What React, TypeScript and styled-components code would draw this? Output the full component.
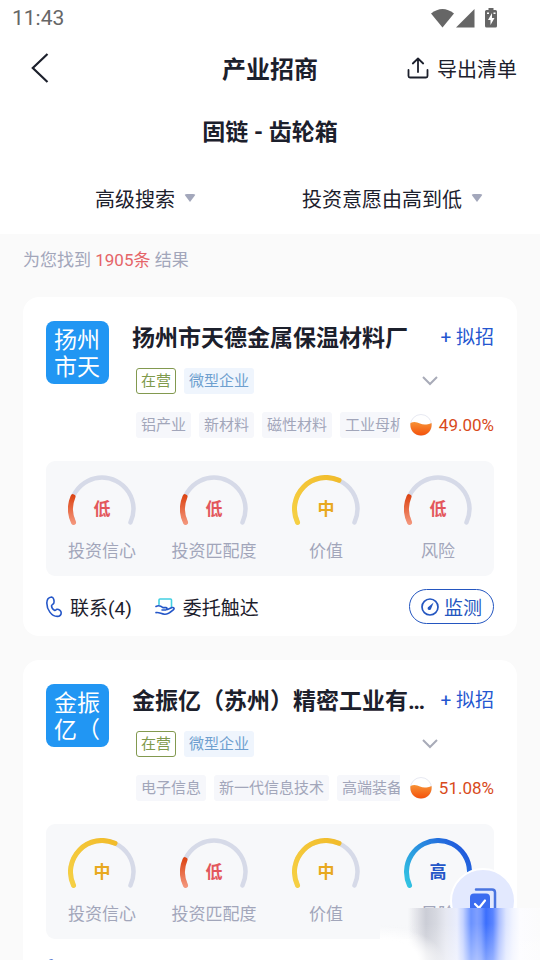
import React, { useId } from "react";
import styled, { createGlobalStyle } from "styled-components";

const GlobalStyle = createGlobalStyle`
  *, *::before, *::after { box-sizing: border-box; }
  body {
    margin: 0;
    background: #fafafa;
    color: #1c202c;
    font-family: Roboto, "Noto Sans CJK SC", sans-serif;
    overflow: hidden;
  }
  button { font-family: inherit; color: inherit; }
  h1, h2, h3, p { margin: 0; }
`;

const Page = styled.div`
  height: 100vh;
  overflow: hidden;
`;

const TopArea = styled.div`
  background: #fff;
`;

const StatusBar = styled.div`
  display: flex;
  align-items: center;
  justify-content: space-between;
  height: 36px;
  padding: 0 41px 0 12px;
  color: #666;
  font-size: 21px;
`;

const StatusIcons = styled.div`
  display: flex;
  align-items: center;
`;

const NavBar = styled.header`
  display: grid;
  grid-template-columns: 1fr auto 1fr;
  align-items: center;
  height: 64px;
  padding: 0 23px;
`;

const PlainButton = styled.button`
  display: inline-flex;
  align-items: center;
  padding: 0;
  border: 0;
  background: none;
  white-space: nowrap;
  cursor: pointer;
`;

const BackButton = styled(PlainButton)`
  justify-self: start;
  padding: 0 8px;
`;

const ExportButton = styled(PlainButton)`
  justify-self: end;
  gap: 8px;
  font-size: 20px;
`;

const PageTitle = styled.h1`
  padding-bottom: 2px;
  font-size: 24px;
  font-weight: 700;
`;

const ChainTitle = styled.h2`
  padding: 16px 0 12px;
  font-size: 23px;
  font-weight: 700;
  line-height: 34px;
  text-align: center;
`;

const FilterBar = styled.div`
  display: flex;
  height: 72px;
  padding: 0 24px 0 22px;
`;

const FilterButton = styled(PlainButton)`
  flex: 1 1 0;
  justify-content: center;
  gap: 9px;
  font-size: 20px;
`;

const Caret = styled.span`
  border: 6px solid transparent;
  border-top: 8px solid #a3a7bb;
  border-bottom: 0;
  border-radius: 3px;
`;

const ResultLine = styled.p`
  padding: 12px 23px;
  color: #a2a6ba;
  font-size: 17px;
  line-height: 28px;
`;

const Count = styled.span`
  color: #e56468;
`;

const CardList = styled.main`
  display: grid;
  gap: 24px;
  padding: 11px 23px 24px;
`;

const CardBox = styled.article`
  padding: 24px 23px 12px;
  border-radius: 16px;
  background: #fff;
`;

const CardHead = styled.div`
  display: grid;
  grid-template-columns: 63px minmax(0, 1fr);
  gap: 23px;
`;

const Avatar = styled.div`
  width: 63px;
  height: 63px;
  padding: 6px 8px 0;
  border-radius: 8px;
  background: #2196f3;
  color: #fff;
  font-size: 23px;
  line-height: 27px;
  word-break: break-all;
  overflow: hidden;
`;

const NameRow = styled.div`
  display: flex;
  justify-content: space-between;
  gap: 12px;
`;

const CompanyName = styled.h3`
  min-width: 0;
  font-size: 23px;
  font-weight: 700;
  line-height: 36px;
  white-space: nowrap;
  overflow: hidden;
  text-overflow: ellipsis;
`;

const AddButton = styled(PlainButton)`
  flex: none;
  align-self: flex-start;
  color: #2456d0;
  font-size: 19px;
  line-height: 34px;
`;

const StatusRow = styled.div`
  display: flex;
  align-items: center;
  gap: 8px;
  margin-top: 11px;
  padding: 0 56px 0 4px;
`;

const Tag = styled.span<{ $tone: "open" | "size" | "industry" }>`
  flex: none;
  padding: 0 5px;
  height: 26px;
  border-radius: 3px;
  font-size: 15px;
  line-height: 27px;
  white-space: nowrap;
  ${(p) =>
    p.$tone === "open"
      ? "padding: 0 4px; line-height: 25px; border: 1px solid #82994f; color: #7f9a4c;"
      : p.$tone === "size"
        ? "background: #eff5fd; color: #6e9fcf;"
        : "background: #f6f7fb; color: #a2a6ba;"}
`;

const ExpandButton = styled(PlainButton)`
  margin-left: auto;
`;

const IndustryRow = styled.div`
  display: flex;
  align-items: center;
  gap: 10px;
  margin-top: 18px;
  padding-left: 4px;
`;

const IndustryTags = styled.div`
  display: flex;
  flex: 1;
  gap: 8px;
  min-width: 0;
  overflow: hidden;
`;

const Intent = styled.span`
  display: flex;
  flex: none;
  align-items: center;
  gap: 7px;
  color: #d84a1b;
  font-size: 17px;
`;

const GaugePanel = styled.div`
  display: grid;
  grid-template-columns: repeat(4, 1fr);
  margin-top: 23px;
  padding: 14px 0 11px;
  border-radius: 9px;
  background: #f7f8fa;
`;

const GaugeCell = styled.div`
  display: flex;
  flex-direction: column;
  align-items: center;
`;

const GaugeDial = styled.div`
  display: grid;
  place-items: center;
  height: 50px;
  > * { grid-area: 1 / 1; }
`;

const GaugeValue = styled.strong<{ $color: string }>`
  padding-top: 18px;
  color: ${(p) => p.$color};
  font-size: 17px;
  font-weight: 700;
  line-height: 32px;
`;

const GaugeLabel = styled.span`
  margin-top: 12px;
  color: #a2a6ba;
  font-size: 17px;
  line-height: 28px;
`;

const CardFoot = styled.div`
  display: flex;
  align-items: center;
  gap: 23px;
  margin-top: 13px;
`;

const FootAction = styled(PlainButton)`
  gap: 8px;
  font-size: 19px;
`;

const WatchButton = styled(PlainButton)`
  gap: 5px;
  height: 35px;
  margin-left: auto;
  padding: 0 11px;
  border: 1px solid #2456c0;
  border-radius: 18px;
  color: #2456c0;
  font-size: 19px;
`;

const FloatingButton = styled.button`
  position: fixed;
  right: 24px;
  bottom: 26px;
  display: grid;
  place-items: center;
  width: 66px;
  height: 66px;
  padding: 0;
  border: 2px solid #fff;
  border-radius: 50%;
  background: #e3e9fe;
`;

const BottomHaze = styled.div`
  position: fixed;
  right: 0;
  bottom: 0;
  width: 160px;
  height: 52px;
  pointer-events: none;
  background:
    radial-gradient(ellipse 64px 34px at 0 100%, #fff 60%, #fff0 100%),
    linear-gradient(to bottom, #fff0 30%, #ffffff59 100%),
    linear-gradient(
      to right,
      #fff0 28px, #dfe0e6 38px, #cbcdd6 46px, #d6d8e0 56px, #e6e8f1 66px,
      #e9edfd 77px, #c5d3ff 83px, #6a92ff 91px, #7f9fff 97px, #7095ff 101px,
      #3b6efd 106px, #5a84ff 113px, #a9bdff 119px, #dde5ff 126px,
      #f1f4ff 133px, #fcfcff 140px, #fbfbfc 160px
    );
`;

type Level = "low" | "mid" | "high";

const TRACK = "M5.5 47.4 A31.5 31.5 0 1 1 62.5 47.4";

const levels: Record<Level, { text: string; color: string; from: string; to: string; arc: string }> = {
  low: { text: "低", color: "#e3575c", from: "#f59a80", to: "#dc4312", arc: "M5.5 47.4 A31.5 31.5 0 0 1 5 21.7" },
  mid: { text: "中", color: "#e8a920", from: "#f6d044", to: "#f1b927", arc: "M5.5 47.4 A31.5 31.5 0 0 1 47 5.3" },
  high: { text: "高", color: "#2456c8", from: "#32c5e2", to: "#2056dc", arc: TRACK },
};

function Gauge({ level, label }: { level: Level; label: string }) {
  const id = useId();
  const l = levels[level];
  return (
    <GaugeCell>
      <GaugeDial>
        <svg width="68" height="50" viewBox="0 0 68 50" fill="none" strokeWidth="5" strokeLinecap="round" aria-hidden="true">
          <defs>
            <linearGradient id={id} gradientUnits="userSpaceOnUse" x1="4" y1="50" x2={level === "low" ? 4 : 60} y2={level === "low" ? 20 : 8}>
              <stop stopColor={l.from} />
              <stop offset="1" stopColor={l.to} />
            </linearGradient>
          </defs>
          {level !== "high" && <path d={TRACK} stroke="#d6dae8" strokeWidth="4.5" />}
          <path d={l.arc} stroke={`url(#${id})`} />
        </svg>
        <GaugeValue $color={l.color}>{l.text}</GaugeValue>
      </GaugeDial>
      <GaugeLabel>{label}</GaugeLabel>
    </GaugeCell>
  );
}

function Drop() {
  const id = useId();
  return (
    <svg width="22" height="22" viewBox="0 0 22 22" aria-hidden="true">
      <defs>
        <linearGradient id={id} x1="0" y1="0" x2="0" y2="1">
          <stop stopColor="#f79236" />
          <stop offset="1" stopColor="#f4510b" />
        </linearGradient>
      </defs>
      <circle cx="11" cy="11" r="10.5" fill="#fff" stroke="#e7e9f2" />
      <path d="M.5 9 C4 7 7 8 10 9.5 S17 11 21.5 9 C22.5 16 17.5 21.6 11 21.6 S-.5 16 .5 9Z" fill={`url(#${id})`} />
    </svg>
  );
}

interface Company {
  short: string;
  name: string;
  industries: string[];
  intent: string;
  gauges: Level[];
}

const gaugeLabels = ["投资信心", "投资匹配度", "价值", "风险"];

const companies: Company[] = [
  {
    short: "扬州市天",
    name: "扬州市天德金属保温材料厂",
    industries: ["铝产业", "新材料", "磁性材料", "工业母机"],
    intent: "49.00%",
    gauges: ["low", "low", "mid", "low"],
  },
  {
    short: "金振亿（",
    name: "金振亿（苏州）精密工业有限公司",
    industries: ["电子信息", "新一代信息技术", "高端装备"],
    intent: "51.08%",
    gauges: ["mid", "low", "mid", "high"],
  },
];

function CompanyCard({ company }: { company: Company }) {
  return (
    <CardBox>
      <CardHead>
        <Avatar>{company.short}</Avatar>
        <div>
          <NameRow>
            <CompanyName>{company.name}</CompanyName>
            <AddButton>+ 拟招</AddButton>
          </NameRow>
          <StatusRow>
            <Tag $tone="open">在营</Tag>
            <Tag $tone="size">微型企业</Tag>
            <ExpandButton aria-label="展开">
              <svg width="16" height="10" viewBox="0 0 16 10" fill="none" stroke="#a8abb8" strokeWidth="2">
                <path d="M1 1 L8 8 L15 1" />
              </svg>
            </ExpandButton>
          </StatusRow>
          <IndustryRow>
            <IndustryTags>
              {company.industries.map((t) => (
                <Tag key={t} $tone="industry">{t}</Tag>
              ))}
            </IndustryTags>
            <Intent>
              <Drop />
              {company.intent}
            </Intent>
          </IndustryRow>
        </div>
      </CardHead>
      <GaugePanel>
        {company.gauges.map((g, i) => (
          <Gauge key={gaugeLabels[i]} level={g} label={gaugeLabels[i]} />
        ))}
      </GaugePanel>
      <CardFoot>
        <FootAction>
          <svg width="16" height="22" viewBox="0 0 16 22" fill="none" stroke="#2456c8" strokeWidth="1.6" strokeLinejoin="round" aria-hidden="true">
            <path d="M5.6 1 C2.6 1.4 .8 3.6 .8 7 C.8 13.5 5.5 20.4 11.2 20.4 C13.8 20.4 15.2 18.8 15.2 16.8 C15.2 14.8 12.6 13 11 13.2 C9.8 13.4 9.7 14.8 8.8 14.5 C7 13.8 5.6 11.6 5.5 9.8 C5.5 8.8 7.4 8.6 7.9 7 C8.5 5 7.6 1 5.6 1Z" />
          </svg>
          联系(4)
        </FootAction>
        <FootAction>
          <svg width="20" height="18" viewBox="0 0 20 18" fill="none" strokeWidth="1.6" strokeLinecap="round" strokeLinejoin="round" aria-hidden="true">
            <path d="M4 6.5 V2 Q4 1 5 1 H15.5 Q16.5 1 16.5 2 V9.5" stroke="#43d0e2" />
            <path d="M1 8.5 C4 6.8 6 8 8 9.6 H11 C12.5 9.8 12.3 11.8 10.8 12 H7 M12.5 11.5 L17 9.6 C19 9 19.8 10.6 18.3 11.8 C15 14.6 12.5 16.6 9.5 16.2 C6 15.8 4 14 1 14.6" stroke="#2456c8" />
          </svg>
          委托触达
        </FootAction>
        <WatchButton>
          <svg width="18" height="18" viewBox="0 0 18 18" fill="none" stroke="#2456c0" strokeWidth="1.7" aria-hidden="true">
            <circle cx="9" cy="9" r="8" />
            <path d="M12.6 4.6 L10.2 10.5 A1.8 1.8 0 1 1 7.6 8.7Z" fill="#2456c0" stroke="none" />
          </svg>
          监测
        </WatchButton>
      </CardFoot>
    </CardBox>
  );
}

export default function App() {
  return (
    <Page>
      <GlobalStyle />
      <TopArea>
        <StatusBar>
          <span>11:43</span>
          <StatusIcons>
            <svg width="68" height="20" viewBox="0 0 68 20" fill="#666" aria-hidden="true">
              <path d="M0 5.5 Q11.5 -3.5 23 5.5 L11.5 19.5Z" />
              <path d="M43.5 1 V19.5 H25Z" />
              <path d="M57.5 0 h5 v2 h2 q1.5 0 1.5 1.5 V18 q0 1.5 -1.5 1.5 h-9 q-1.5 0 -1.5 -1.5 V3.5 q0 -1.5 1.5 -1.5 h2z" />
              <path d="M61 5 L57 12 h2.5 v5 L63.5 10 H61z M56 4.5 h2 v1.5 h-2z M62.5 4.5 h2 v1.5 h-2z" fill="#fff" />
            </svg>
          </StatusIcons>
        </StatusBar>
        <NavBar>
          <BackButton aria-label="返回">
            <svg width="18" height="30" viewBox="0 0 18 30" fill="none" stroke="#1c202c" strokeWidth="2.2">
              <path d="M16.5 1 L1.8 15 L16.5 29" />
            </svg>
          </BackButton>
          <PageTitle>产业招商</PageTitle>
          <ExportButton>
            <svg width="22" height="22" viewBox="0 0 22 22" fill="none" stroke="#1c202c" strokeWidth="1.8" strokeLinecap="round" strokeLinejoin="round" aria-hidden="true">
              <path d="M1.5 13 V19 Q1.5 20.5 3 20.5 H19 Q20.5 20.5 20.5 19 V13 M11 15 V1.5 M5.8 6.5 L11 1.5 L16.2 6.5" />
            </svg>
            导出清单
          </ExportButton>
        </NavBar>
        <ChainTitle>固链 - 齿轮箱</ChainTitle>
        <FilterBar>
          <FilterButton>高级搜索<Caret /></FilterButton>
          <FilterButton>投资意愿由高到低<Caret /></FilterButton>
        </FilterBar>
      </TopArea>
      <ResultLine>
        为您找到 <Count>1905条</Count> 结果
      </ResultLine>
      <CardList>
        {companies.map((c) => (
          <CompanyCard key={c.name} company={c} />
        ))}
      </CardList>
      <FloatingButton aria-label="清单">
        <svg width="28" height="26" viewBox="0 0 28 26" fill="none" aria-hidden="true">
          <path d="M7 1.5 H23 Q26 1.5 26 4.5 V22" stroke="#4a74e0" strokeWidth="2.5" strokeLinecap="round" />
          <rect x="1" y="5.5" width="20" height="20" rx="4" fill="#3b6cf0" />
          <path d="M6 16 L10 20 L16 12.5" stroke="#fff" strokeWidth="2.2" strokeLinecap="round" />
        </svg>
      </FloatingButton>
      <BottomHaze />
    </Page>
  );
}
